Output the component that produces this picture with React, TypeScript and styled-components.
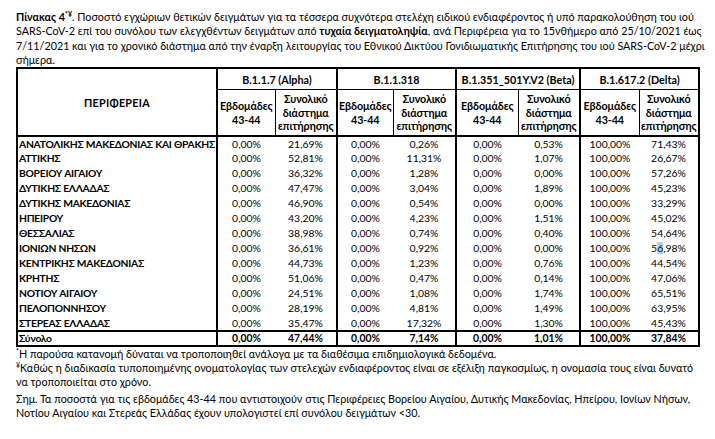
import React from "react";
import styled, { createGlobalStyle } from "styled-components";

const GlobalStyle = createGlobalStyle`
  html, body { margin: 0; padding: 0; background: #ffffff; }
  body { font-family: Lato, "Noto Sans", sans-serif; color: #000; }
`;

const Page = styled.div`
  width: 715px;
  height: 439px;
  box-sizing: border-box;
  padding: 10px 0 0 16px;
  overflow: hidden;
`;

const Intro = styled.div`
  font-size: 10.75px;
  line-height: 14.4px;
  height: 57px;
`;

const Line = styled.div<{ $gap?: number }>`
  white-space: nowrap;
  margin-top: ${(p) => p.$gap ?? 0}px;
`;

const Sup = styled.sup`
  font-size: 7px;
  line-height: 0;
  vertical-align: 4px;
`;

const Table = styled.table`
  border-collapse: collapse;
  table-layout: fixed;
  width: 682px;
  border: 2px solid #000;
  font-size: 10.5px;
`;

const Col = styled.col<{ $w: number }>`
  width: ${(p) => p.$w}px;
`;

const RegionHead = styled.th`
  border-right: 2px solid #000;
  border-bottom: 2px solid #000;
  font-weight: 700;
  font-size: 10.75px;
  letter-spacing: 0.3px;
  text-align: center;
  vertical-align: middle;
  padding: 0;
`;

const GroupHead = styled.th`
  height: 20px;
  border-right: 2px solid #000;
  border-bottom: 1px solid #000;
  font-weight: 700;
  font-size: 10.75px;
  text-align: center;
  padding: 0;
  white-space: nowrap;
`;

const SubHead = styled.th<{ $end?: boolean }>`
  height: 45px;
  border-right: ${(p) => (p.$end ? "2px" : "1px")} solid #000;
  border-bottom: 2px solid #000;
  font-weight: 700;
  font-size: 10.75px;
  line-height: 13.5px;
  text-align: center;
  vertical-align: middle;
  padding: 0;
  white-space: nowrap;
  letter-spacing: -0.1px;
`;

const Row = styled.tr<{ $total?: boolean }>`
  height: 15px;
  border-top: ${(p) => (p.$total ? "2px solid #000" : "none")};
  font-weight: ${(p) => (p.$total ? 700 : 400)};
`;

const NameCell = styled.td`
  border-right: 2px solid #000;
  padding: 0 0 0 1px;
  font-weight: 700;
  font-size: 10.3px;
  letter-spacing: -0.25px;
  white-space: nowrap;
  overflow: hidden;
  line-height: 13px;
`;

const ValCell = styled.td<{ $end?: boolean }>`
  border-right: ${(p) => (p.$end ? "2px solid #000" : "none")};
  text-align: center;
  padding: 0;
  white-space: nowrap;
  font-size: 10.4px;
  line-height: 13px;
`;

const Sel = styled.span`
  background: #b4d2f2;
`;

const Notes = styled.div`
  font-size: 10.75px;
  line-height: 14px;
`;

type RowData = [string, ...string[]];

const rows: RowData[] = [
  ["ΑΝΑΤΟΛΙΚΗΣ ΜΑΚΕΔΟΝΙΑΣ ΚΑΙ ΘΡΑΚΗΣ", "0,00%", "21,69%", "0,00%", "0,26%", "0,00%", "0,53%", "100,00%", "71,43%"],
  ["ΑΤΤΙΚΗΣ", "0,00%", "52,81%", "0,00%", "11,31%", "0,00%", "1,07%", "100,00%", "26,67%"],
  ["ΒΟΡΕΙΟΥ ΑΙΓΑΙΟΥ", "0,00%", "36,32%", "0,00%", "1,28%", "0,00%", "0,00%", "100,00%", "57,26%"],
  ["ΔΥΤΙΚΗΣ ΕΛΛΑΔΑΣ", "0,00%", "47,47%", "0,00%", "3,04%", "0,00%", "1,89%", "100,00%", "45,23%"],
  ["ΔΥΤΙΚΗΣ ΜΑΚΕΔΟΝΙΑΣ", "0,00%", "46,90%", "0,00%", "0,54%", "0,00%", "0,00%", "100,00%", "33,29%"],
  ["ΗΠΕΙΡΟΥ", "0,00%", "43,20%", "0,00%", "4,23%", "0,00%", "1,51%", "100,00%", "45,02%"],
  ["ΘΕΣΣΑΛΙΑΣ", "0,00%", "38,98%", "0,00%", "0,74%", "0,00%", "0,40%", "100,00%", "54,64%"],
  ["ΙΟΝΙΩΝ ΝΗΣΩΝ", "0,00%", "36,61%", "0,00%", "0,92%", "0,00%", "0,00%", "100,00%", "56,98%"],
  ["ΚΕΝΤΡΙΚΗΣ ΜΑΚΕΔΟΝΙΑΣ", "0,00%", "44,73%", "0,00%", "1,23%", "0,00%", "0,76%", "100,00%", "44,54%"],
  ["ΚΡΗΤΗΣ", "0,00%", "51,06%", "0,00%", "0,47%", "0,00%", "0,14%", "100,00%", "47,06%"],
  ["ΝΟΤΙΟΥ ΑΙΓΑΙΟΥ", "0,00%", "24,51%", "0,00%", "1,08%", "0,00%", "1,74%", "100,00%", "65,51%"],
  ["ΠΕΛΟΠΟΝΝΗΣΟΥ", "0,00%", "28,19%", "0,00%", "4,81%", "0,00%", "1,49%", "100,00%", "63,95%"],
  ["ΣΤΕΡΕΑΣ ΕΛΛΑΔΑΣ", "0,00%", "35,47%", "0,00%", "17,32%", "0,00%", "1,30%", "100,00%", "45,43%"],
];

const total: RowData = ["Σύνολο", "0,00%", "47,44%", "0,00%", "7,14%", "0,00%", "1,01%", "100,00%", "37,84%"];

const groups = ["B.1.1.7 (Alpha)", "B.1.1.318", "B.1.351_501Y.V2 (Beta)", "B.1.617.2 (Delta)"];
const widths = [200, 58, 62, 56, 63, 62, 62, 59, 60];

function renderValue(v: string, highlight: boolean) {
  if (!highlight) return v;
  return (
    <>
      5<Sel>6</Sel>,98%
    </>
  );
}

function DataRow({ data, isTotal }: { data: RowData; isTotal?: boolean }) {
  const [name, ...vals] = data;
  return (
    <Row $total={isTotal}>
      <NameCell>{name}</NameCell>
      {vals.map((v, i) => (
        <ValCell key={i} $end={i % 2 === 1}>
          {renderValue(v, !isTotal && name === "ΙΟΝΙΩΝ ΝΗΣΩΝ" && i === 7)}
        </ValCell>
      ))}
    </Row>
  );
}

export default function App() {
  return (
    <>
      <GlobalStyle />
      <Page>
        <Intro>
          <Line>
            <b>
              Πίνακας 4<Sup>*¥</Sup>
            </b>
            . Ποσοστό εγχώριων θετικών δειγμάτων για τα τέσσερα συχνότερα στελέχη ειδικού ενδιαφέροντος ή υπό παρακολούθηση του ιού
          </Line>
          <Line>
            SARS-CoV-2 επί του συνόλου των ελεγχθέντων δειγμάτων από <b>τυχαία δειγματοληψία</b>, ανά Περιφέρεια για το 15νθήμερο από 25/10/2021 έως
          </Line>
          <Line>
            7/11/2021 και για το χρονικό διάστημα από την έναρξη λειτουργίας του Εθνικού Δικτύου Γονιδιωματικής Επιτήρησης του ιού SARS-CoV-2 μέχρι
          </Line>
          <Line>σήμερα.</Line>
        </Intro>
        <Table>
          <colgroup>
            {widths.map((w, i) => (
              <Col key={i} $w={w} />
            ))}
          </colgroup>
          <thead>
            <tr>
              <RegionHead rowSpan={2}>ΠΕΡΙΦΕΡΕΙΑ</RegionHead>
              {groups.map((g) => (
                <GroupHead key={g} colSpan={2}>
                  {g}
                </GroupHead>
              ))}
            </tr>
            <tr>
              {groups.map((g) => (
                <React.Fragment key={g}>
                  <SubHead>
                    Εβδομάδες
                    <br />
                    43-44
                  </SubHead>
                  <SubHead $end>
                    Συνολικό
                    <br />
                    διάστημα
                    <br />
                    επιτήρησης
                  </SubHead>
                </React.Fragment>
              ))}
            </tr>
          </thead>
          <tbody>
            {rows.map((r) => (
              <DataRow key={r[0]} data={r} />
            ))}
            <DataRow data={total} isTotal />
          </tbody>
        </Table>
        <Notes>
          <Line>
            <Sup>*</Sup>Η παρούσα κατανομή δύναται να τροποποιηθεί ανάλογα με τα διαθέσιμα επιδημιολογικά δεδομένα.
          </Line>
          <Line>
            <Sup>¥</Sup>Καθώς η διαδικασία τυποποιημένης ονοματολογίας των στελεχών ενδιαφέροντος είναι σε εξέλιξη παγκοσμίως, η ονομασία τους είναι δυνατό
          </Line>
          <Line>να τροποποιείται στο χρόνο.</Line>
          <Line $gap={3}>
            Σημ. Τα ποσοστά για τις εβδομάδες 43-44 που αντιστοιχούν στις Περιφέρειες Βορείου Αιγαίου, Δυτικής Μακεδονίας, Ηπείρου, Ιονίων Νήσων,
          </Line>
          <Line>Νοτίου Αιγαίου και Στερεάς Ελλάδας έχουν υπολογιστεί επί συνόλου δειγμάτων &lt;30.</Line>
        </Notes>
      </Page>
    </>
  );
}
